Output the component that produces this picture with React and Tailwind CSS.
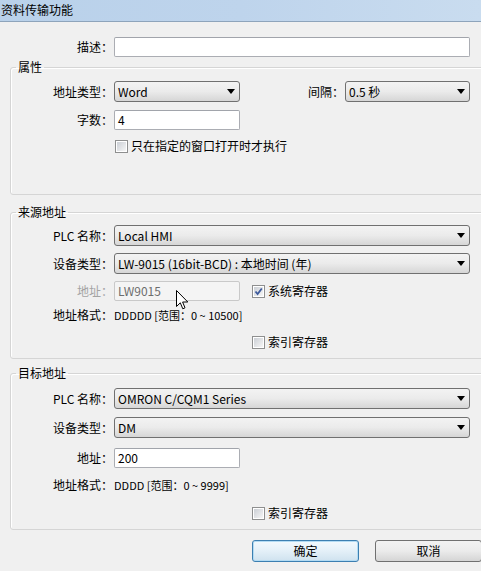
import React from 'react';

const FONT = { fontFamily: '"Noto Sans CJK SC", "Liberation Sans", sans-serif' };

function Arrow() {
  return (
    <svg width="8" height="5" viewBox="0 0 8 5" className="shrink-0">
      <path d="M0 0 H8 L4 5 Z" fill="#000" />
    </svg>
  );
}

function Label({ w = 'w-[103px]', children, muted }) {
  return (
    <div className={`${w} shrink-0 text-right pr-[1px] text-[12px] leading-[14px] ${muted ? 'text-[#a3a3a3]' : 'text-[#000]'}`}>
      {children}
    </div>
  );
}

function Select({ w, value }) {
  return (
    <div className={`${w} h-[21px] shrink-0 flex items-center justify-between pl-[3px] pr-[4px] rounded-[3px] border border-[#707070] bg-gradient-to-b from-[#f3f3f3] via-[#ebebeb] to-[#d6d6d6] text-[12px] leading-[14px] text-[#000]`}>
      <span className="whitespace-nowrap">{value}</span>
      <Arrow />
    </div>
  );
}

function Input({ w, value, disabled }) {
  return (
    <div className={`${w} h-[20px] shrink-0 flex items-center pl-[3px] rounded-[2px] border text-[12px] leading-[14px] ${disabled ? 'border-[#c9c9c9] bg-[#f4f4f4] text-[#6d6d6d]' : 'border-[#abadb3] border-t-[#a1a4ab] bg-white text-[#000]'}`}>
      {value}
    </div>
  );
}

function Checkbox({ checked, label }) {
  return (
    <div className="flex items-center h-[14px] text-[12px] leading-[14px] text-[#000]">
      <div className="w-[13px] h-[13px] shrink-0 border border-[#8e8f8f] bg-white p-[1px]">
        <div className="w-full h-full bg-gradient-to-br from-[#cbcfd5] to-[#f6f6f6] flex items-center justify-center">
          {checked && (
            <svg width="9" height="9" viewBox="0 0 9 9">
              <path d="M1.5 4.5 L3.6 7 L7.8 1.5" fill="none" stroke="#3d5a9c" strokeWidth="1.8" />
            </svg>
          )}
        </div>
      </div>
      <span className="ml-[3px] whitespace-nowrap">{label}</span>
    </div>
  );
}

function Group({ title, h, mt, children }) {
  return (
    <fieldset className={`${h} ${mt} ml-[10px] w-[480px] border border-[#d5d5d5] rounded-[3px] shadow-[inset_1px_1px_0_#ffffff]`}>
      <legend className="ml-[5px] px-[2px] text-[12px] leading-[14px] text-[#000]">{title}</legend>
      {children}
    </fieldset>
  );
}

export default function App() {
  return (
    <div className="relative w-[481px] h-[571px] overflow-hidden bg-[#f0f0f0]" style={FONT}>
      <div className="h-[22px] border-b border-[#8ea4bb] bg-gradient-to-r from-[#b9d1ea] via-[#bed4ec] to-[#c9dcef] text-[12px] leading-[20px] text-[#000] pl-[1px]">
        资料传输功能
      </div>

      <div className="flex items-center mt-[15px]">
        <Label w="w-[114px]">描述：</Label>
        <Input w="w-[356px]" value="" />
      </div>

      <Group title="属性" h="h-[135px]" mt="mt-[3px]">
        <div className="flex items-center mt-[7px]">
          <Label>地址类型：</Label>
          <Select w="w-[126px]" value="Word" />
          <Label w="w-[105px]">间隔：</Label>
          <Select w="w-[125px]" value="0.5 秒" />
        </div>
        <div className="flex items-center mt-[8px]">
          <Label>字数：</Label>
          <Input w="w-[126px]" value="4" />
        </div>
        <div className="flex items-center mt-[9px] ml-[104px]">
          <Checkbox label="只在指定的窗口打开时才执行" />
        </div>
      </Group>

      <Group title="来源地址" h="h-[154px]" mt="mt-[10px]">
        <div className="flex items-center mt-[6px]">
          <Label>PLC 名称：</Label>
          <Select w="w-[356px]" value="Local HMI" />
        </div>
        <div className="flex items-center mt-[7px]">
          <Label>设备类型：</Label>
          <Select w="w-[356px]" value="LW-9015 (16bit-BCD) : 本地时间 (年)" />
        </div>
        <div className="flex items-center mt-[7px]">
          <Label muted>地址：</Label>
          <Input w="w-[126px]" value="LW9015" disabled />
          <div className="ml-[12px]">
            <Checkbox checked label="系统寄存器" />
          </div>
        </div>
        <div className="flex items-center mt-[7px] h-[14px]">
          <Label>地址格式：</Label>
          <span className="text-[11px] leading-[14px] whitespace-nowrap">DDDDD [范围：0 ~ 10500]</span>
        </div>
        <div className="flex items-center mt-[13px] ml-[241px]">
          <Checkbox label="索引寄存器" />
        </div>
      </Group>

      <Group title="目标地址" h="h-[164px]" mt="mt-[7px]">
        <div className="flex items-center mt-[8px]">
          <Label>PLC 名称：</Label>
          <Select w="w-[356px]" value="OMRON C/CQM1 Series" />
        </div>
        <div className="flex items-center mt-[8px]">
          <Label>设备类型：</Label>
          <Select w="w-[356px]" value="DM" />
        </div>
        <div className="flex items-center mt-[10px]">
          <Label>地址：</Label>
          <Input w="w-[126px]" value="200" />
        </div>
        <div className="flex items-center mt-[10px] h-[14px]">
          <Label>地址格式：</Label>
          <span className="text-[11px] leading-[14px] whitespace-nowrap">DDDD [范围：0 ~ 9999]</span>
        </div>
        <div className="flex items-center mt-[14px] ml-[241px]">
          <Checkbox label="索引寄存器" />
        </div>
      </Group>

      <div className="flex mt-[10px] ml-[252px] gap-[16px]">
        <button className="w-[107px] h-[22px] shrink-0 rounded-[3px] border border-[#3c7fb1] bg-gradient-to-b from-[#f2f9fd] via-[#e4f0f8] to-[#cfe2ef] shadow-[inset_0_0_0_1px_#b3dbf3] text-[12px] text-[#000]">
          确定
        </button>
        <button className="w-[107px] h-[22px] shrink-0 rounded-[3px] border border-[#707070] bg-gradient-to-b from-[#f2f2f2] via-[#ebebeb] to-[#d5d5d5] text-[12px] text-[#000]">
          取消
        </button>
      </div>

      <svg className="absolute left-[176px] top-[290px]" width="13" height="21" viewBox="0 0 13 21">
        <path d="M0.5 0.5 V16.5 L4.3 12.8 L6.8 18.8 L9 17.8 L6.6 12 H11.8 Z" fill="#fff" stroke="#000" strokeWidth="1" strokeLinejoin="round" />
      </svg>
    </div>
  );
}
